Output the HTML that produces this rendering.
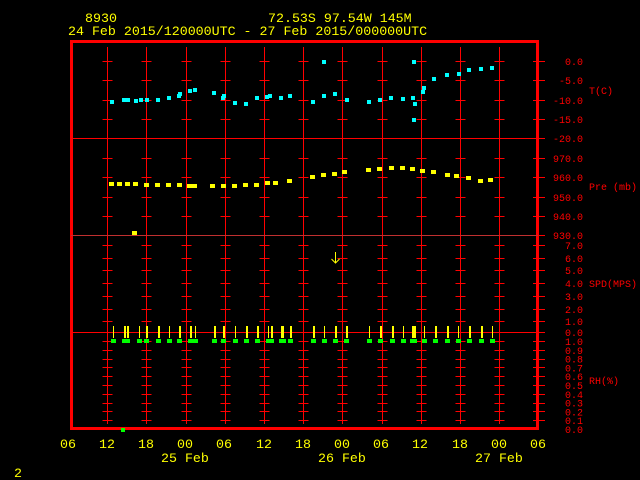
<!DOCTYPE html>
<html><head><style>
html,body{margin:0;padding:0;background:#000;width:640px;height:480px;overflow:hidden}
svg{display:block}
text{font-family:"Liberation Mono","DejaVu Sans Mono",monospace;font-size:10px}
.y{font-size:13.3px}
</style></head><body>
<svg id="s" width="640" height="480" xmlns="http://www.w3.org/2000/svg">
<g fill="#ffff00" class="y">
<text class="y" x="85" y="22">8930</text>
<text class="y" x="268" y="22">72.53S   97.54W   145M</text>
<text class="y" x="68" y="35">24 Feb 2015/120000UTC - 27 Feb 2015/000000UTC</text>
<text class="y" x="60" y="448">06</text><text class="y" x="99" y="448">12</text><text class="y" x="138" y="448">18</text><text class="y" x="177" y="448">00</text><text class="y" x="216" y="448">06</text><text class="y" x="256" y="448">12</text><text class="y" x="295" y="448">18</text><text class="y" x="334" y="448">00</text><text class="y" x="373" y="448">06</text><text class="y" x="412" y="448">12</text><text class="y" x="452" y="448">18</text><text class="y" x="491" y="448">00</text><text class="y" x="530" y="448">06</text>
<text class="y" x="161" y="462">25 Feb</text><text class="y" x="318" y="462">26 Feb</text><text class="y" x="475" y="462">27 Feb</text>
</g>
<text x="14" y="477" fill="#ffff00" class="y">2</text>
<g id="grid" stroke="#f00" stroke-width="1"></g>
<rect x="71.5" y="41.5" width="466" height="387" fill="none" stroke="#f00" stroke-width="3"/>
<line x1="71" y1="138.5" x2="538" y2="138.5" stroke="#f00"/>
<line x1="71" y1="235.5" x2="538" y2="235.5" stroke="#c03030"/>
<line x1="71" y1="332.5" x2="538" y2="332.5" stroke="#f00"/>
<g id="lab" fill="#f00"></g>
<g fill="#f00">
<text x="589" y="94">T(C)</text>
<text x="589" y="190">Pre (mb)</text>
<text x="589" y="287">SPD(MPS)</text>
<text x="589" y="384">RH(%)</text>
</g>
<g id="data"></g>
<path d="M335.5 252v11M331.5 259l4 4 4-4" stroke="#ffff00" fill="none"/>
<rect x="121" y="428" width="4" height="4" fill="#0f0"/>
</svg>
<script>
var NS="http://www.w3.org/2000/svg";
function el(p,t,a){var e=document.createElementNS(NS,t);for(var k in a)e.setAttribute(k,a[k]);p.appendChild(e);return e;}
var g=document.getElementById('grid'),lab=document.getElementById('lab'),d=document.getElementById('data');
var ys=[61,80,100,119,138,158,177,197,216,235,245,258,270,283,296,309,321,332];
for(var i=0;i<10;i++)ys.push(Math.round(341+i*8.8));
var gx=[];for(var k=1;k<12;k++)gx.push(68+39.2*k);
gx.forEach(function(x){x=Math.round(x)+0.5;
 el(g,'line',{x1:x,y1:47,x2:x,y2:424});
 ys.forEach(function(y){el(g,'line',{x1:x-5,y1:y+.5,x2:x+5,y2:y+.5});});
});
ys.forEach(function(y){el(g,'line',{x1:533,y1:y+.5,x2:545,y2:y+.5});});
var L=[["0.0",61],["-5.0",80],["-10.0",100],["-15.0",119],["-20.0",138],["970.0",158],["960.0",177],["950.0",197],["940.0",216],["930.0",235],["7.0",245],["6.0",258],["5.0",270],["4.0",283],["3.0",296],["2.0",309],["1.0",321],["0.0",332]];
var rh=["1.0","0.9","0.8","0.7","0.6","0.5","0.4","0.3","0.2","0.1","0.0"];
rh.forEach(function(t,i){L.push([t,341+i*8.8]);});
L.forEach(function(l){el(lab,'text',{x:583,y:l[1]+4,'text-anchor':'end'}).textContent=l[0];});
var T=[[112,102],[124,100],[128,100],[136,101],[141,100],[147,100],[158,100],[169,98],[179,96],[180,94],[190,91],[195,90],[214,93],[223,98],[224,96],[235,103],[246,104],[257,98],[267,97],[270,96],[281,98],[290,96],[313,102],[324,62],[324,96],[335,94],[347,100],[369,102],[380,100],[391,98],[403,99],[413,98],[414,62],[414,120],[415,104],[423,92],[424,88],[434,79],[447,75],[459,74],[469,70],[481,69],[492,68]];
T.forEach(function(p){el(d,'rect',{x:p[0]-2,y:p[1]-2,width:4,height:4,fill:'#0ff'});});
var P=[[112,184],[120,184],[128,184],[136,184],[147,185],[158,185],[169,185],[180,185],[190,186],[195,186],[213,186],[224,186],[235,186],[246,185],[257,185],[268,183],[276,183],[290,181],[313,177],[324,175],[335,174],[345,172],[369,170],[380,169],[392,168],[403,168],[413,169],[423,171],[434,172],[448,175],[457,176],[469,178],[481,181],[491,180],[135,233]];
P.forEach(function(p){el(d,'rect',{x:p[0]-3,y:p[1]-2,width:5,height:4,fill:'#ff0'});});
var B=[142,172,180,213,233,265,294,321,351,364,415,441,472,503,532,562,570,596,602,621,683,714,743,772,835,864,896,925,951,957,983,1012,1045,1074,1105,1136,1166];
B.forEach(function(b,i){var x=Math.round(60+b/2.7);var w=(i%3==0)?1:2;
 el(d,'rect',{x:x,y:326,width:w,height:12,fill:'#ff0'});
 el(d,'rect',{x:x-2,y:339,width:5,height:4,fill:'#0f0'});});
</script>
</body></html>
